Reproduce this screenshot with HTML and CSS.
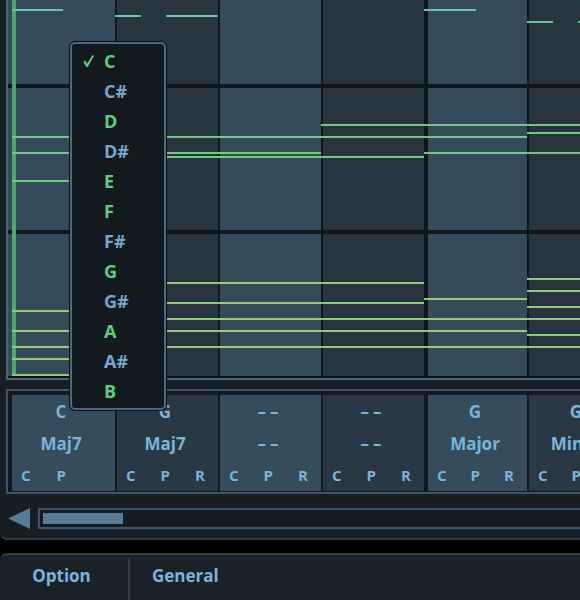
FILE: index.html
```html
<!DOCTYPE html>
<html>
<head>
<meta charset="utf-8">
<link rel="stylesheet" href="styles.css">
</head>
<body>
<div class="main">
  <div class="roll-frame">
    <div class="roll">
      <div class="col light first"><div class="cell r0"></div><div class="cell r1"></div><div class="cell r2"></div></div>
      <div class="col dark"><div class="cell r0"></div><div class="cell r1"></div><div class="cell r2"></div></div>
      <div class="col light"><div class="cell r0"></div><div class="cell r1"></div><div class="cell r2"></div></div>
      <div class="col dark"><div class="cell r0"></div><div class="cell r1"></div><div class="cell r2"></div></div>
      <div class="col light bar"><div class="cell r0"></div><div class="cell r1"></div><div class="cell r2"></div></div>
      <div class="col dark last"><div class="cell r0"></div><div class="cell r1"></div><div class="cell r2"></div></div>
      <svg class="notes" width="572" height="376" viewBox="8 0 572 376">
        <rect class="marker" x="12" y="0" width="4" height="376"/>
        <g class="n-top">
          <rect x="12" y="9" width="51" height="2"/>
          <rect x="115" y="15" width="26" height="2"/>
          <rect x="166" y="15" width="52" height="2"/>
          <rect x="424" y="9" width="52" height="2"/>
          <rect x="527" y="21" width="26" height="2"/>
          <rect x="578" y="21" width="10" height="2"/>
        </g>
        <g class="n-mid">
          <rect x="321" y="124" width="259" height="2"/>
          <rect x="12" y="136" width="515" height="2"/>
          <rect x="527" y="132" width="53" height="2"/>
          <rect x="12" y="152" width="309" height="2"/>
          <rect x="424" y="152" width="156" height="2"/>
          <rect x="117" y="156" width="307" height="2"/>
          <rect x="12" y="180" width="105" height="2"/>
        </g>
        <g class="n-low">
          <rect x="12" y="310" width="105" height="2"/>
          <rect x="12" y="330" width="105" height="2"/>
          <rect x="12" y="346" width="105" height="2"/>
          <rect x="12" y="358" width="105" height="2"/>
          <rect x="12" y="374" width="105" height="2"/>
          <rect x="117" y="282" width="307" height="2"/>
          <rect x="117" y="302" width="307" height="2"/>
          <rect x="117" y="318" width="307" height="2"/>
          <rect x="117" y="330" width="307" height="2"/>
          <rect x="117" y="346" width="307" height="2"/>
          <rect x="424" y="298" width="103" height="2"/>
          <rect x="424" y="318" width="103" height="2"/>
          <rect x="424" y="330" width="103" height="2"/>
          <rect x="424" y="346" width="103" height="2"/>
          <rect x="527" y="278" width="53" height="2"/>
          <rect x="527" y="290" width="53" height="2"/>
          <rect x="527" y="306" width="53" height="2"/>
          <rect x="527" y="318" width="53" height="2"/>
          <rect x="527" y="334" width="53" height="2"/>
          <rect x="527" y="346" width="53" height="2"/>
        </g>
      </svg>
    </div>
  </div>

  <div class="chords-frame">
    <div class="chord light first">
      <div class="root">C</div><div class="qual">Maj7</div>
      <div class="cpr"><span>C</span><span>P</span><span class="hidden">R</span></div>
    </div>
    <div class="chord dark">
      <div class="root">G</div><div class="qual">Maj7</div>
      <div class="cpr"><span>C</span><span>P</span><span>R</span></div>
    </div>
    <div class="chord light">
      <div class="root dash">––</div><div class="qual dash">––</div>
      <div class="cpr"><span>C</span><span>P</span><span>R</span></div>
    </div>
    <div class="chord dark">
      <div class="root dash">––</div><div class="qual dash">––</div>
      <div class="cpr"><span>C</span><span>P</span><span>R</span></div>
    </div>
    <div class="chord light bar">
      <div class="root">G</div><div class="qual">Major</div>
      <div class="cpr"><span>C</span><span>P</span><span>R</span></div>
    </div>
    <div class="chord dark last">
      <div class="root">G</div><div class="qual">Minor</div>
      <div class="cpr"><span>C</span><span>P</span><span>R</span></div>
    </div>
  </div>

  <div class="scroll-row">
    <svg class="arrow" width="22" height="21" viewBox="0 0 22 21"><polygon points="0,10.5 22,0 22,21"/></svg>
    <div class="track"><div class="thumb"></div></div>
  </div>

  <div class="menu">
    <div class="item natural"><span class="check"><svg width="11" height="12" viewBox="0 0 11 12"><path d="M0.3 6.4 L2.2 5.5 L4.1 8.7 L9.5 0 L11 0.7 L4.7 12 L3.4 12 Z"/></svg></span><span>C</span></div>
    <div class="item sharp"><span class="check"></span><span>C#</span></div>
    <div class="item natural"><span class="check"></span><span>D</span></div>
    <div class="item sharp"><span class="check"></span><span>D#</span></div>
    <div class="item natural"><span class="check"></span><span>E</span></div>
    <div class="item natural"><span class="check"></span><span>F</span></div>
    <div class="item sharp"><span class="check"></span><span>F#</span></div>
    <div class="item natural"><span class="check"></span><span>G</span></div>
    <div class="item sharp"><span class="check"></span><span>G#</span></div>
    <div class="item natural"><span class="check"></span><span>A</span></div>
    <div class="item sharp"><span class="check"></span><span>A#</span></div>
    <div class="item natural"><span class="check"></span><span>B</span></div>
  </div>
</div>

<div class="footer">
  <div class="tab option">Option</div>
  <div class="divider"></div>
  <div class="tab general">General</div>
</div>
</body>
</html>
```

FILE: styles.css
```css
* { box-sizing: border-box; }
html, body { margin: 0; padding: 0; }
body {
  width: 580px;
  height: 600px;
  overflow: hidden;
  background: #000;
  font-family: "Open Sans", "DejaVu Sans", sans-serif;
  font-weight: 700;
}

.main {
  position: relative;
  height: 540px;
  background: #171e24;
  border-bottom: 2px solid #2d3e4b;
  border-bottom-left-radius: 7px;
  overflow: hidden;
}

/* piano roll */
.roll-frame {
  width: 574px;
  margin-left: 6px;
  border-left: 2px solid #4a6377;
  border-bottom: 2px solid #4a6377;
  padding-bottom: 2px;
  background: #10171c;
}
.roll {
  position: relative;
  display: flex;
  gap: 2px;
  height: 376px;
  overflow: hidden;
}
.col {
  flex: none;
  width: 101px;
  display: flex;
  flex-direction: column;
  gap: 4px;
}
.col.first { width: 107px; }
.col.bar { width: 99px; margin-left: 2px; }
.col.last { width: 99px; }
.cell { flex: none; }
.cell.r0 { height: 84px; }
.cell.r1, .cell.r2 { height: 142px; }
.col.light .cell { background: #364b5a; }
.col.dark .cell { background: #28353f; }

.notes { position: absolute; left: 0; top: 0; }
.notes .marker { fill: #4aa86a; }
.notes .n-top rect { fill: #6cc4a0; }
.notes .n-mid rect { fill: #6fca82; }
.notes .n-low rect { fill: #96c87c; }

/* chord strip */
.chords-frame {
  margin-top: 9px;
  margin-left: 6px;
  height: 105px;
  border: 2px solid #3d5568;
  border-right: none;
  padding: 4px 0 1px 4px;
  background: #121920;
  display: flex;
  gap: 2px;
  overflow: hidden;
}
.chord {
  flex: none;
  width: 101px;
  height: 96px;
  padding: 1px 5px 0 0;
  display: grid;
  grid-template-rows: 32px 32px 31px;
  color: #7ab4dc;
  text-align: center;
}
.chord.first { width: 103px; }
.chord.bar { width: 99px; margin-left: 2px; }
.chord.last { width: 99px; }
.chord.light { background: #374c5b; }
.chord.dark { background: #2a3843; }
.root, .qual { font-size: 17px; line-height: 32px; white-space: nowrap; }
.dash { letter-spacing: 4px; padding-left: 4px; }
.cpr {
  display: flex;
  justify-content: space-between;
  padding: 0 8px 0 9px;
  font-size: 15px;
  line-height: 31px;
}
.hidden { visibility: hidden; }

/* scroll bar */
.scroll-row {
  margin-top: 14px;
  height: 21px;
  display: flex;
  gap: 8px;
  padding-left: 8px;
}
.arrow { flex: none; display: block; }
.arrow polygon { fill: #587c95; }
.track {
  flex: 1;
  height: 21px;
  border: 2px solid #3c5467;
  border-right: none;
  padding: 3px 0 0 3px;
  background: #141b21;
}
.thumb {
  width: 80px;
  height: 11px;
  background: #597d96;
}

/* key menu */
.menu {
  position: absolute;
  left: 70px;
  top: 42px;
  width: 96px;
  height: 368px;
  background: #121a1f;
  border: 2px solid #4e6a7f;
  border-radius: 5px;
  box-shadow: 0 0 0 1px #0b1014;
  padding-top: 2px;
}
.item {
  display: flex;
  align-items: center;
  height: 30px;
  padding-left: 11px;
  font-size: 18px;
}
.check { width: 21px; flex: none; display: flex; align-items: center; }
.check svg { display: block; margin-top: -1px; }
.check path { fill: #5cd07c; }
.natural { color: #5cd07c; }
.sharp { color: #7aa6c8; }

/* footer */
.footer {
  margin-top: 13px;
  height: 47px;
  background: #1a2228;
  border-top: 2px solid #2d3e4b;
  border-top-left-radius: 7px;
  display: flex;
  color: #7ab4dc;
  font-size: 17px;
}
.tab { line-height: 42px; }
.tab.option { width: 128px; padding-right: 5px; text-align: center; }
.divider { width: 2px; margin-top: 3px; background: #2d3e4b; }
.tab.general { padding-left: 22px; }
```
